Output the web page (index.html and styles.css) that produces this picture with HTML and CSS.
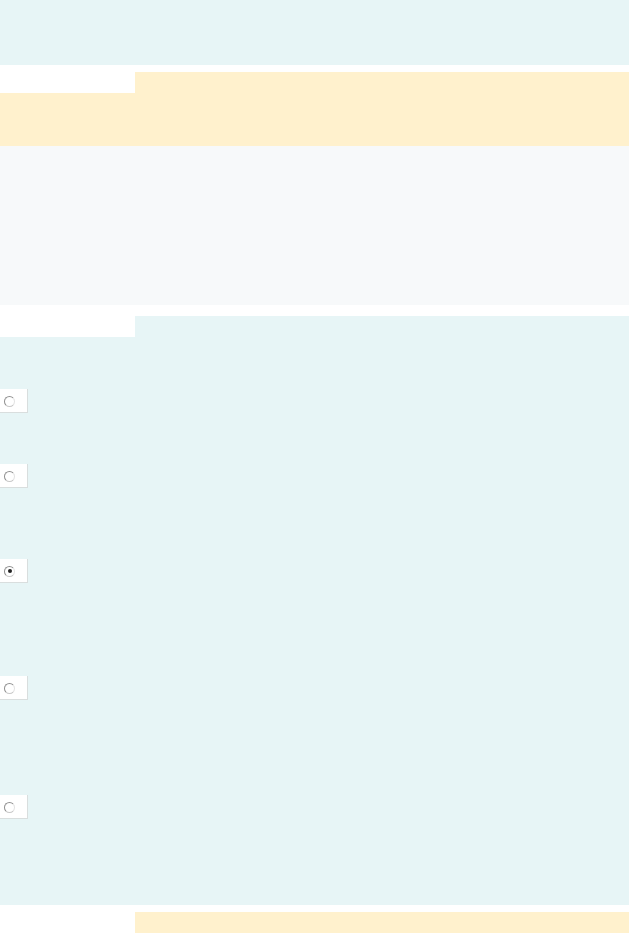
FILE: index.html
```html
<!DOCTYPE html>
<html lang="en">
<head>
    <meta charset="UTF-8">
    <meta name="viewport" content="width=device-width, initial-scale=1.0">
    <title>Quiz</title>
    <link rel="stylesheet" href="styles.css">
</head>
<body>
    <header class="top_bar"></header>

    <section class="block yellow">
        <div class="tab_row">
            <div class="tab_label"></div>
            <div class="tab_fill"></div>
        </div>
        <div class="block_body intro"></div>
    </section>

    <section class="question"></section>

    <section class="block cyan">
        <div class="tab_row">
            <div class="tab_label"></div>
            <div class="tab_fill"></div>
        </div>
        <ul class="block_body options">
            <li class="option row1"><label class="radio_box"><span class="radio"></span></label></li>
            <li class="option row2"><label class="radio_box"><span class="radio"></span></label></li>
            <li class="option row3"><label class="radio_box"><span class="radio checked"></span></label></li>
            <li class="option row4"><label class="radio_box"><span class="radio"></span></label></li>
            <li class="option row5"><label class="radio_box"><span class="radio"></span></label></li>
        </ul>
    </section>

    <section class="block yellow last">
        <div class="tab_row">
            <div class="tab_label"></div>
            <div class="tab_fill"></div>
        </div>
    </section>
</body>
</html>
```
FILE: styles.css
```css
*{
    padding: 0;
    margin: 0;
    box-sizing: border-box;
    font-family: 'Liberation Sans', Arial, sans-serif;
    font-size: 12px;
}
ul,ol{
    list-style-type: none;
}
body{
    background: #fff;
    width: 629px;
}
.top_bar{
    height: 65px;
    background: #e7f5f6;
    margin-bottom: 7px;
}
.tab_row{
    display: flex;
    height: 21px;
}
.tab_label{
    width: 135px;
    background: #fff;
}
.tab_fill{
    flex: 1;
}
.yellow .tab_fill, .yellow .block_body{
    background: #fff1cd;
}
.cyan .tab_fill, .cyan .block_body{
    background: #e7f5f6;
}
.intro{
    height: 53px;
}
.question{
    height: 159px;
    background: #f7f9fa;
    margin-bottom: 11px;
}
.options{
    padding: 52px 0 86px 0;
    height: 568px;
}
.option{
    display: flex;
    align-items: flex-start;
}
.row1{ height: 75px; }
.row2{ height: 95px; }
.row3{ height: 117px; }
.row4{ height: 119px; }
.row5{ height: 24px; }
.radio_box{
    display: flex;
    align-items: center;
    width: 28px;
    height: 24px;
    padding: 1px 0 0 4px;
    background: #fff;
    border-right: 1px solid #d9dede;
    border-bottom: 1px solid #d9dede;
}
.radio{
    display: flex;
    align-items: center;
    justify-content: center;
    width: 11px;
    height: 11px;
    border-radius: 50%;
    border: 1.5px solid #8f8f8f;
    border-right-color: #e2e2e2;
    border-bottom-color: #c8c8c8;
}
.radio.checked::after{
    content: '';
    width: 4px;
    height: 4px;
    border-radius: 50%;
    background: #222;
}
.last{
    margin-top: 7px;
}
```
